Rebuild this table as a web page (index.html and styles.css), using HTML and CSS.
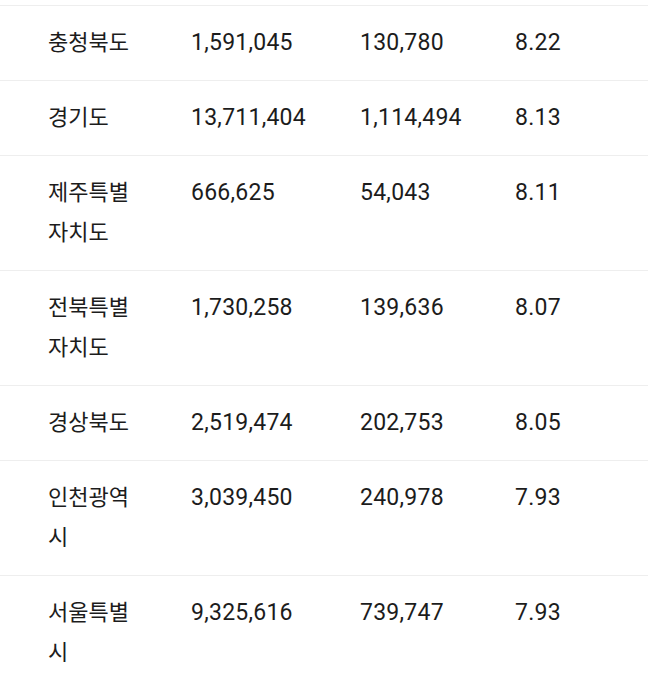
FILE: index.html
```html
<!DOCTYPE html>
<html lang="ko">
<head>
<meta charset="utf-8">
<link rel="stylesheet" href="styles.css">
</head>
<body>
<div class="table">
  <div class="row"><div class="c name">충청북도</div><div class="c">1,591,045</div><div class="c">130,780</div><div class="c">8.22</div></div>
  <div class="row"><div class="c name">경기도</div><div class="c">13,711,404</div><div class="c">1,114,494</div><div class="c">8.13</div></div>
  <div class="row"><div class="c name">제주특별자치도</div><div class="c">666,625</div><div class="c">54,043</div><div class="c">8.11</div></div>
  <div class="row"><div class="c name">전북특별자치도</div><div class="c">1,730,258</div><div class="c">139,636</div><div class="c">8.07</div></div>
  <div class="row"><div class="c name">경상북도</div><div class="c">2,519,474</div><div class="c">202,753</div><div class="c">8.05</div></div>
  <div class="row"><div class="c name">인천광역시</div><div class="c">3,039,450</div><div class="c">240,978</div><div class="c">7.93</div></div>
  <div class="row"><div class="c name">서울특별시</div><div class="c">9,325,616</div><div class="c">739,747</div><div class="c">7.93</div></div>
</div>
</body>
</html>
```
FILE: styles.css
```css
html, body {
  margin: 0;
  padding: 0;
  background: #ffffff;
}
body {
  font-family: Roboto, "Noto Sans CJK KR", sans-serif;
  font-size: 23px;
  color: #1c1c1c;
}
.table {
  margin-top: 5px;
  width: 648px;
}
.row {
  display: grid;
  grid-template-columns: 191px 169px 155px 1fr;
  border-top: 1px solid #eeeeee;
  padding: 17px 0;
  line-height: 40px;
}
.c {
  word-break: keep-all;
  letter-spacing: 0.25px;
}
.name {
  font-size: 22px;
  letter-spacing: 0;
  padding-left: 48px;
  padding-right: 45px;
  word-break: break-all;
}
```
